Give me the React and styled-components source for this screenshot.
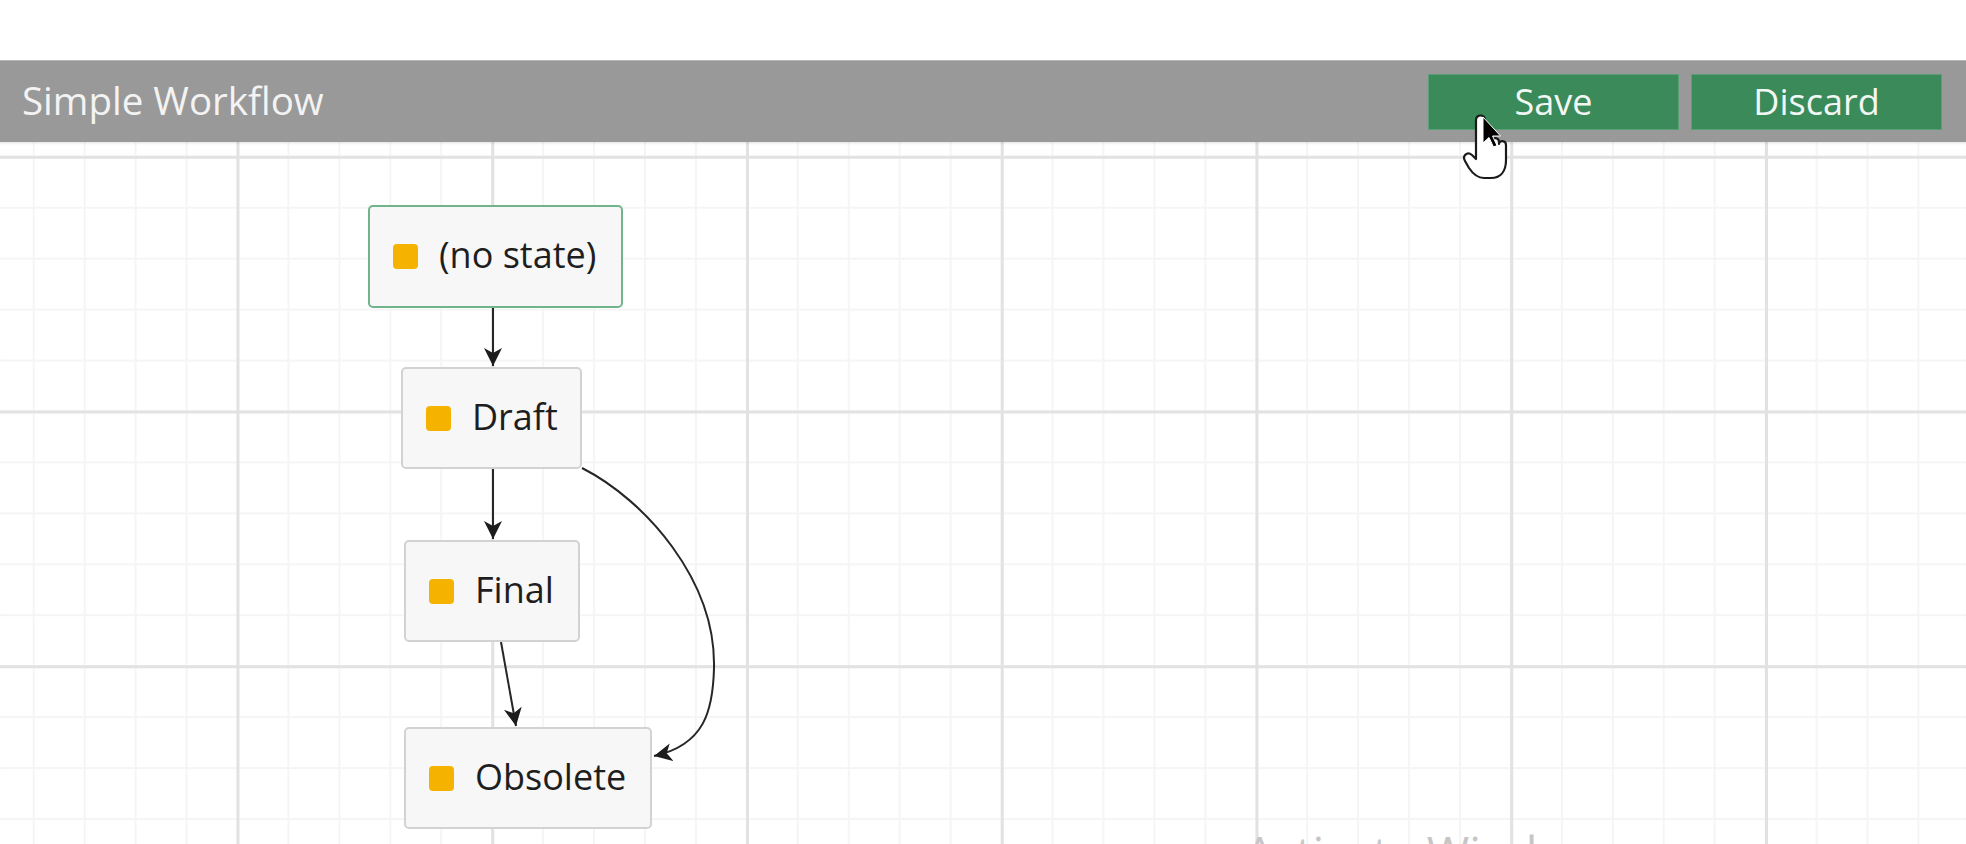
import React from "react";
import styled, { createGlobalStyle } from "styled-components";

const GlobalStyle = createGlobalStyle`
  html, body {
    margin: 0;
    padding: 0;
    background: #ffffff;
  }
  body {
    font-family: "Open Sans", "Noto Sans", sans-serif;
    overflow: hidden;
  }
`;

const nodes = [
  { label: "(no state)", x: 368, y: 205, w: 255, h: 103, active: true },
  { label: "Draft", x: 401, y: 367, w: 181, h: 102 },
  { label: "Final", x: 404, y: 540, w: 176, h: 102 },
  { label: "Obsolete", x: 404, y: 727, w: 248, h: 102 },
];

const App = () => {
  return (
    <Page>
      <GlobalStyle />
      <TopSpace />
      <Header>
        <Title>Simple Workflow</Title>
        <Actions>
          <Button>Save</Button>
          <Button>Discard</Button>
        </Actions>
        <Cursor viewBox="0 0 50 70" width="50" height="70">
          <path
            d="M14 8 C14 2 23 2 23 8 L23 26 C23 22 30 22 30 27 L30 29 C30 25 37 25 37 30 L37 32 C37 28 44 28 44 33 L44 48 C44 60 38 66 29 66 L22 66 C15 66 11 62 7 56 L3 49 C0 44 5 39 10 43 L14 47 Z"
            fill="#ffffff"
            stroke="#1a1a1a"
            strokeWidth="2.2"
            strokeLinejoin="round"
          />
          <path
            d="M21 5 L21 31 L27 25.5 L31.5 35 L35 33.5 L30.5 24 L38.5 24 Z"
            fill="#000000"
            stroke="#ffffff"
            strokeWidth="1"
            strokeLinejoin="round"
          />
        </Cursor>
      </Header>
      <Canvas>
        <Edges viewBox="0 142 1966 702" preserveAspectRatio="none">
          <defs>
            <marker
              id="head"
              markerUnits="userSpaceOnUse"
              markerWidth="20"
              markerHeight="20"
              refX="18"
              refY="9"
              orient="auto"
            >
              <path d="M0 0 L18 9 L0 18 L5 9 Z" fill="#1c1c1c" />
            </marker>
          </defs>
          <Edge d="M493 308 L493 366" markerEnd="url(#head)" />
          <Edge d="M493 469 L493 539" markerEnd="url(#head)" />
          <Edge d="M501 642 L516 726" markerEnd="url(#head)" />
          <Edge
            d="M582 468 C 645 500, 716 580, 714 668 C 713 710, 705 745, 654 756"
            markerEnd="url(#head)"
          />
        </Edges>
        {nodes.map((n) => (
          <Node key={n.label} $x={n.x} $y={n.y - 142} $w={n.w} $h={n.h} $active={n.active}>
            <Dot />
            <Label>{n.label}</Label>
          </Node>
        ))}
        <Watermark>Activate Windows</Watermark>
      </Canvas>
    </Page>
  );
};

export default App;

const Page = styled.div`
  width: 1966px;
  height: 844px;
  display: flex;
  flex-direction: column;
  overflow: hidden;
`;

const TopSpace = styled.div`
  height: 60px;
  flex-shrink: 0;
  background: #ffffff;
`;

const Header = styled.div`
  position: relative;
  height: 82px;
  flex-shrink: 0;
  box-sizing: border-box;
  background: #999999;
  border-top: 1px solid #b5b5b5;
  display: flex;
  align-items: center;
  justify-content: space-between;
  padding: 0 24px 0 22px;
  z-index: 2;
`;

const Title = styled.div`
  font-size: 38.5px;
  color: #f3f3f3;
  margin-top: -4px;
`;

const Actions = styled.div`
  display: flex;
  gap: 12px;
`;

const Button = styled.button`
  width: 251px;
  height: 56px;
  box-sizing: border-box;
  border: 1px solid #5a9f75;
  background: #3a8a5a;
  color: #f2f7f3;
  font-family: "Open Sans", "Noto Sans", sans-serif;
  font-size: 36px;
  line-height: 1;
  padding: 0;
  cursor: pointer;
`;

const Cursor = styled.svg`
  position: absolute;
  left: 1462px;
  top: 51px;
  overflow: visible;
`;

const Canvas = styled.div`
  position: relative;
  flex: 1;
  overflow: hidden;
  background-color: #ffffff;
  background-image:
    linear-gradient(to right, #e2e2e2 2.5px, transparent 2.5px),
    linear-gradient(to bottom, #e2e2e2 2.5px, transparent 2.5px),
    linear-gradient(to right, #f5f5f5 2px, transparent 2px),
    linear-gradient(to bottom, #f5f5f5 2px, transparent 2px);
  background-size:
    254.75px 100%,
    100% 254.75px,
    50.95px 100%,
    100% 50.95px;
  background-position:
    236.5px 0,
    0 268.5px,
    236.5px 0,
    0 268.5px;
  box-shadow: inset 0 3px 3px -2px rgba(0, 0, 0, 0.12);
`;

const Edges = styled.svg`
  position: absolute;
  left: 0;
  top: 0;
  width: 1966px;
  height: 702px;
  z-index: 1;
`;

const Edge = styled.path`
  fill: none;
  stroke: #262626;
  stroke-width: 2;
`;

const Node = styled.div`
  position: absolute;
  left: ${(p) => p.$x}px;
  top: ${(p) => p.$y}px;
  width: ${(p) => p.$w}px;
  height: ${(p) => p.$h}px;
  box-sizing: border-box;
  border: 2px solid ${(p) => (p.$active ? "#71b48c" : "#d2d2d2")};
  border-radius: 5px;
  background: #f7f7f7;
  display: flex;
  align-items: center;
  gap: 21px;
  padding-left: 23px;
  z-index: 2;
`;

const Dot = styled.span`
  width: 25px;
  height: 25px;
  border-radius: 4px;
  background: #f5b300;
  flex-shrink: 0;
`;

const Label = styled.span`
  font-size: 36px;
  color: #1e1e1e;
  line-height: 1;
  margin-top: -3px;
  white-space: nowrap;
`;

const Watermark = styled.div`
  position: absolute;
  left: 1245px;
  top: 687px;
  font-size: 46px;
  line-height: 1;
  color: #c6c6c6;
  white-space: nowrap;
  z-index: 3;
`;
